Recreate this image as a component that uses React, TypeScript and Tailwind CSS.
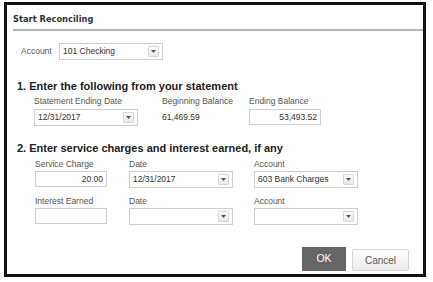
import React from 'react';

const arial = { fontFamily: '"Liberation Sans", Arial, sans-serif' };

function Caret() {
  return (
    <span className="flex h-[11px] w-[11px] items-center justify-center rounded-[1px] border border-[#d9d9d9] bg-gradient-to-b from-white to-[#ebebeb]">
      <svg width="5" height="3" viewBox="0 0 5 3">
        <path d="M0 0h5L2.5 3z" fill="#555" />
      </svg>
    </span>
  );
}

function Select({ value, className }: { value?: string; className: string }) {
  return (
    <div
      className={`flex h-[17px] w-[104px] items-center justify-between border border-[#d0d0d0] bg-white pl-[3px] pr-[3px] text-[8.5px] leading-none text-[#333] ${className}`}
    >
      <span>{value}</span>
      <Caret />
    </div>
  );
}

function Input({ value, className }: { value?: string; className: string }) {
  return (
    <div
      className={`flex h-[16px] w-[72px] items-center justify-end border border-[#d0d0d0] bg-white pr-[3px] text-[8.5px] leading-none text-[#333] ${className}`}
    >
      {value}
    </div>
  );
}

function Label({ children }: { children: React.ReactNode }) {
  return <div className="h-[10px] text-[8.5px] leading-[10px] text-[#555]">{children}</div>;
}

export default function App() {
  return (
    <div className="h-[282px] w-[433px] bg-white pl-[4px] pt-[2px]" style={arial}>
      <div className="h-[275px] w-[422px] border-[3px] border-[#111] bg-white">
        {/* Title bar */}
        <div className="ml-[6px] pt-[9px]">
          <div
            className="h-[10px] text-[8.3px] font-bold leading-[10px] text-[#333]"
            style={{ fontFamily: '"DejaVu Sans", Verdana, sans-serif' }}
          >
            Start Reconciling
          </div>
          <div className="mt-[5px] h-[2px] bg-[#b5b5b5]" />
        </div>

        {/* Account */}
        <div className="mt-[12px] flex items-center pl-[14px]">
          <span className="w-[38px] text-[8.5px] text-[#555]">Account</span>
          <Select value="101 Checking" className="" />
        </div>

        {/* Section 1 */}
        <div className="mt-[20px] h-[13px] pl-[10px] text-[11px] font-bold leading-[13px] text-[#222]">
          1. Enter the following from your statement
        </div>
        <div className="mt-[3px] flex pl-[27px]">
          <div className="w-[128px]">
            <Label>Statement Ending Date</Label>
            <Select value="12/31/2017" className="mt-[3px]" />
          </div>
          <div className="w-[87px]">
            <Label>Beginning Balance</Label>
            <div className="mt-[3px] flex h-[16px] items-center text-[8.5px] leading-none text-[#333]">
              61,469.59
            </div>
          </div>
          <div>
            <Label>Ending Balance</Label>
            <Input value="53,493.52" className="mt-[3px]" />
          </div>
        </div>

        {/* Section 2 */}
        <div className="mt-[16px] h-[13px] pl-[10px] text-[11px] font-bold leading-[13px] text-[#222]">
          2. Enter service charges and interest earned, if any
        </div>
        <div className="mt-[4px] grid grid-cols-[94px_125px_104px] gap-y-[8px] pl-[28px]">
          <div>
            <Label>Service Charge</Label>
            <Input value="20.00" className="mt-[2px]" />
          </div>
          <div>
            <Label>Date</Label>
            <Select value="12/31/2017" className="mt-[2px]" />
          </div>
          <div>
            <Label>Account</Label>
            <Select value="603 Bank Charges" className="mt-[2px]" />
          </div>
          <div>
            <Label>Interest Earned</Label>
            <Input className="mt-[2px]" />
          </div>
          <div>
            <Label>Date</Label>
            <Select className="mt-[2px]" />
          </div>
          <div>
            <Label>Account</Label>
            <Select className="mt-[2px]" />
          </div>
        </div>

        {/* Buttons */}
        <div className="mt-[22px] flex items-end justify-end gap-[6px] pr-[14px]">
          <button className="h-[24px] w-[44px] bg-[#666] text-[10.5px] text-white" style={arial}>
            OK
          </button>
          <button
            className="h-[22px] w-[57px] rounded-[2px] border border-[#d4d4d4] bg-gradient-to-b from-white to-[#ebebeb] text-[10px] text-[#555]"
            style={arial}
          >
            Cancel
          </button>
        </div>
      </div>
    </div>
  );
}
